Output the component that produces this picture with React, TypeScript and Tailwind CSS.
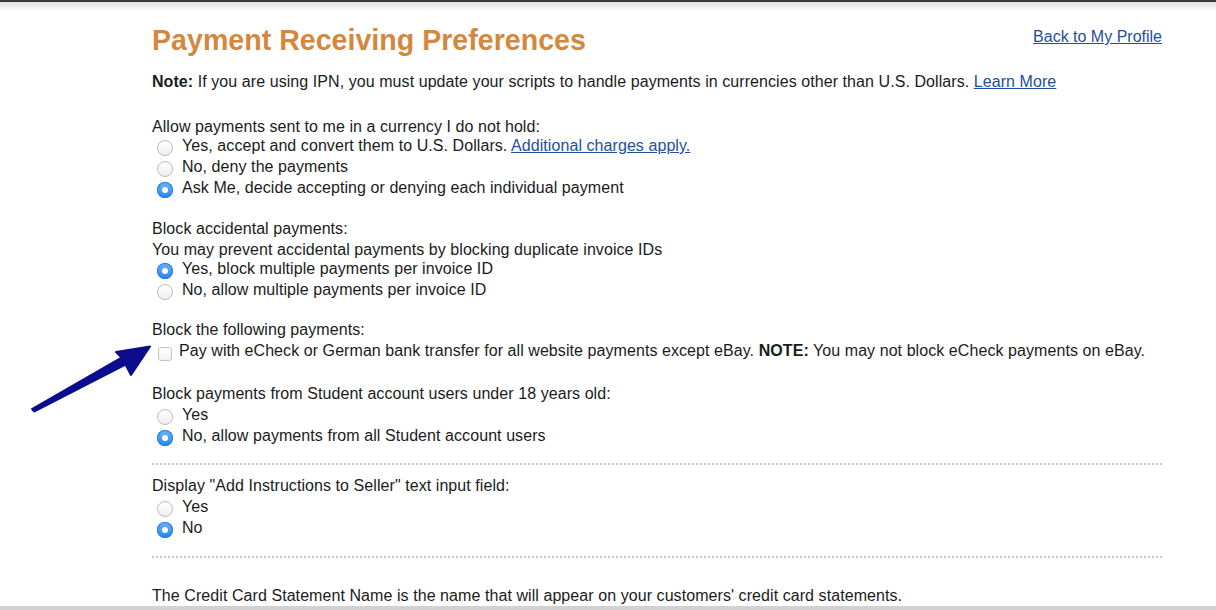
import React from 'react'

const FONT = { fontFamily: '"Liberation Sans", Arial, Helvetica, sans-serif' }

const Radio: React.FC<{ checked?: boolean }> = ({ checked }) =>
  checked ? (
    <span className="mt-[5px] flex h-[16px] w-[16px] shrink-0 items-center justify-center rounded-full bg-linear-to-b from-[#6db4fb] to-[#1c82f7] shadow-[inset_0_0_0_1px_#2b7fe0]">
      <span className="h-[6px] w-[6px] rounded-full bg-white" />
    </span>
  ) : (
    <span className="mt-[5px] h-[16px] w-[16px] shrink-0 rounded-full border border-[#bcbcbc] bg-linear-to-b from-white to-[#efefef]" />
  )

const Option: React.FC<{ checked?: boolean; children: React.ReactNode }> = ({ checked, children }) => (
  <div className="flex items-start pl-[5px]">
    <Radio checked={checked} />
    <span className="ml-[9px]">{children}</span>
  </div>
)

const Dots = () => <div className="border-t-2 border-dotted border-[#c9c9c9]" />

export default function App() {
  return (
    <div
      className="relative flex h-[610px] flex-col overflow-hidden bg-white text-[16px] leading-[21px] tracking-[0.07px] text-[#1b1b1b]"
      style={FONT}
    >
      {/* window edge */}
      <div className="h-[2px] bg-[#3c3c3c]" />
      <div className="h-[12px] bg-linear-to-b from-[#e0e0e0] to-white" />

      <div className="flex-1 pl-[152px]">
        <div className="w-[1010px]">
          {/* Header */}
          <div className="flex items-start justify-between pt-[13px]">
            <h1 className="text-[28.6px] font-bold leading-[32px] tracking-normal text-[#d3883e]">
              Payment Receiving Preferences
            </h1>
            <a href="#" className="mt-[3px] text-[16px] leading-[20px] tracking-normal text-[#1d4f9e] underline">
              Back to My Profile
            </a>
          </div>

          <p className="mt-[15px]">
            <b>Note:</b> If you are using IPN, you must update your scripts to handle payments in currencies other than U.S. Dollars.{' '}
            <a href="#" className="text-[#1d4f9e] underline">Learn More</a>
          </p>

          {/* Currency */}
          <div className="mt-[24px]">
            <div className="mb-[-2px]">Allow payments sent to me in a currency I do not hold:</div>
            <Option>
              Yes, accept and convert them to U.S. Dollars.{' '}
              <a href="#" className="text-[#1d4f9e] underline">Additional charges apply.</a>
            </Option>
            <Option>No, deny the payments</Option>
            <Option checked>Ask Me, decide accepting or denying each individual payment</Option>
          </div>

          {/* Accidental */}
          <div className="mt-[20px]">
            <div>Block accidental payments:</div>
            <div className="mb-[-2px]">You may prevent accidental payments by blocking duplicate invoice IDs</div>
            <Option checked>Yes, block multiple payments per invoice ID</Option>
            <Option>No, allow multiple payments per invoice ID</Option>
          </div>

          {/* Block payments */}
          <div className="mt-[19px]">
            <div>Block the following payments:</div>
            <div className="flex items-start pl-[6px]">
              <span className="mt-[7px] h-[14px] w-[14px] shrink-0 rounded-[3px] border border-[#c4c4c4] bg-linear-to-b from-white to-[#f2f2f2]" />
              <span className="ml-[7px]">
                Pay with eCheck or German bank transfer for all website payments except eBay. <b>NOTE:</b> You may not block eCheck payments on eBay.
              </span>
            </div>
          </div>

          {/* Student */}
          <div className="mt-[22px]">
            <div>Block payments from Student account users under 18 years old:</div>
            <Option>Yes</Option>
            <Option checked>No, allow payments from all Student account users</Option>
          </div>

          <div className="mt-[17px]">
            <Dots />
          </div>

          <div className="mt-[10px]">
            <div>Display "Add Instructions to Seller" text input field:</div>
            <Option>Yes</Option>
            <Option checked>No</Option>
          </div>

          <div className="mt-[18px]">
            <Dots />
          </div>

          <p className="mt-[27px]">The Credit Card Statement Name is the name that will appear on your customers' credit card statements.</p>
        </div>
      </div>

      <div className="h-[4px] shrink-0 bg-[#d2d2d2]" />

      {/* annotation arrow */}
      <svg className="pointer-events-none absolute left-0 top-0" width="1216" height="610" viewBox="0 0 1216 610">
        <polygon
          points="32,409 121.5,357.5 116,352 150,346.5 131,375 125.5,364.5 34,411.5"
          fill="#0c0c8e"
          stroke="#0c0c8e"
          strokeWidth="2"
          strokeLinejoin="round"
        />
      </svg>
    </div>
  )
}
